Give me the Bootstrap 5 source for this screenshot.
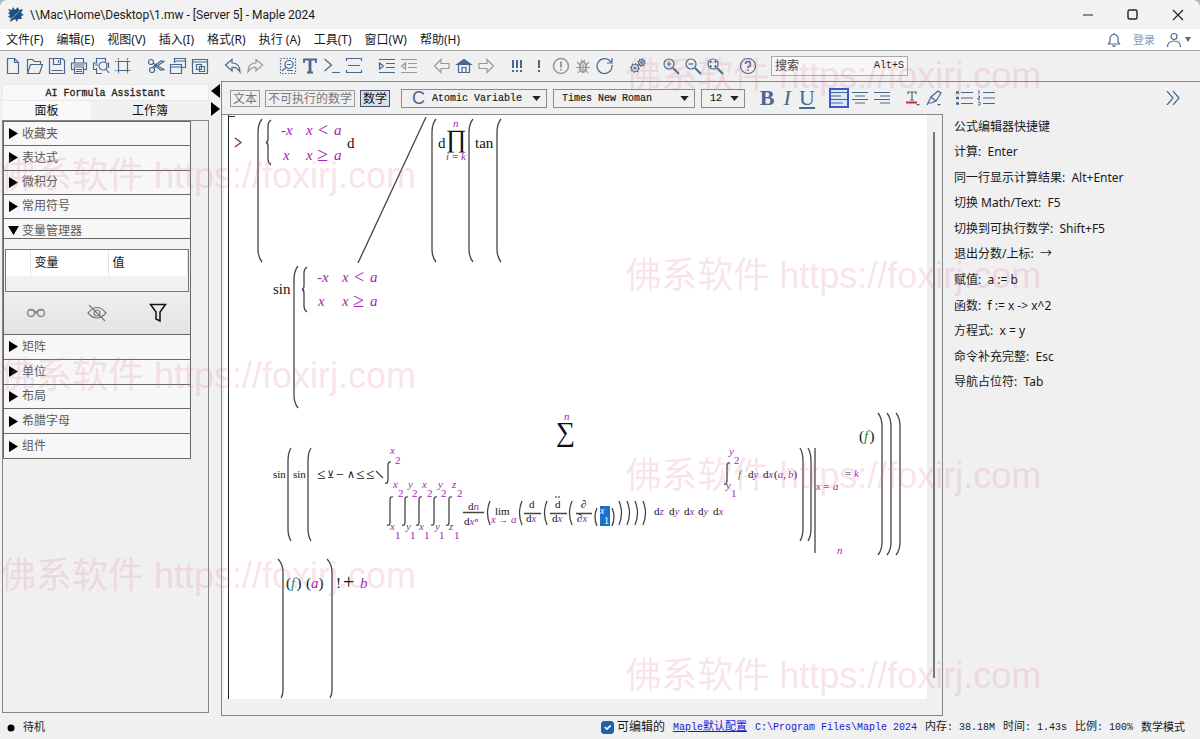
<!DOCTYPE html>
<html lang="zh-CN">
<head>
<meta charset="utf-8">
<meta name="viewport" content="width=device-width, initial-scale=1">
<title>Maple 2024</title>
<link href="https://cdn.jsdelivr.net/npm/bootstrap@5.3.0/dist/css/bootstrap.min.css" rel="stylesheet">
<style>
:root{--ink:#47698f;--line:#858585;--face:#f0f0f0;--ui:"Noto Sans","Noto Sans CJK SC",sans-serif;--mono:"Liberation Mono","Noto Sans CJK SC",monospace}
body{font-family:var(--ui);font-size:12px;line-height:18px;color:#1a1a1a;background:#a9bccb}
button{background:none;border:0;padding:0;color:inherit}
svg{display:block;flex:none}
.app{background:var(--face);border-radius:8px 8px 0 0;overflow:hidden}
.mono{font-family:var(--mono);font-size:10px}
.zh{font-size:11px}
.titlebar{height:29px;background:#f2f2f2;padding:0 0 0 7px}
.titlebar .name{font-family:Roboto,"Noto Sans",sans-serif;margin-left:6px}
.win{width:45px;height:29px;display:grid;place-items:center}
.menus{height:22px;background:#fff;border-bottom:1px solid #a3a3a3;padding:0 9px 0 6px}
.menus .items{gap:13px}
.menus a,.foot a{text-decoration:none;color:inherit}
.tools{height:30px;padding-left:2px;gap:11px}
.ico{width:22px;height:22px;display:grid;place-items:center;color:var(--ink)}
.ico svg,.tag svg{fill:none;stroke:currentColor;stroke-width:1.2}
.off{color:#999}
.pull{margin-left:-2px}
.find{width:137px;height:20px;border:1px solid #aaa;background:#f7f7f7;padding:0 3px;margin-left:1px}
.find input{border:0;background:none;outline:0;min-width:0;padding:0}
.find input::placeholder{color:#444;opacity:1}
.side{width:209px;padding:3px 0 3px 2px}
.tabs button{height:19px;flex:1;line-height:18px;color:#111}
.assist{height:17px;background:#f8f8f8;color:#222;-webkit-text-stroke:.3px;border:1px solid #e9e9e9!important}
.tabs .on{background:#f9f9f9;flex:0 0 43%}
.panelbox{border:1px solid var(--line);padding-right:17px;background:var(--face)}
.pal{border:1px solid #686868;border-width:1px 1px 0;display:grid;grid-auto-rows:1fr;background:#f7f7f7}
.pal.four{height:98px}.pal.five{height:124px;border-top:0}
.pal button,.vm-head{border-bottom:1px solid #686868;display:flex;align-items:center;gap:4px;padding-left:5px;color:#5a5a5a;width:100%;text-align:left}
.vm-head{height:20px;background:#f7f7f7;border-left:1px solid #686868!important;border-right:1px solid #686868!important;padding-top:4px!important;padding-left:4px;gap:3px}
.vm{border:1px solid #686868;border-top:0;background:linear-gradient(#f3f3f3 40%,#e3e3e3);height:96px;padding:10px 1px 0}
.vm .box{border:1px solid #777;height:43px;background:#f1f1f1}
.vm th{font-weight:400;background:#fff;height:26px;padding:0 4px;border-right:1px solid #e4e4e4;color:#111}
.vm .acts{height:42px}
.vm .acts button{flex:1;display:grid;place-items:center}
.split{width:12px;padding:3px 0 0 2px}
.work{border-left:1px solid #85878f;border-top:1px solid var(--line)}
.fmt{height:32px;padding-left:8px}
.tag{border:1px solid #999;height:17px;line-height:15px;padding:0 2px;color:#777;margin-right:5px;white-space:nowrap}
.tag.on{border-color:#42556e;background:#d5e0ee;color:#111}
.drop{position:relative;height:19px;margin-left:6px}
.drop select{appearance:none;width:100%;height:100%;border:1px solid #858c94;background:var(--face) url("data:image/svg+xml,%3Csvg xmlns='http://www.w3.org/2000/svg' viewBox='0 0 10 6'%3E%3Cpath d='M0 0h10L5 6z' fill='%23222'/%3E%3C/svg%3E") right 5px center/9px 5px no-repeat;padding:0 8px;color:#222;-webkit-text-stroke:.2px;outline:0;border-radius:0}
.drop .var{padding-left:30px}
.drop span{position:absolute;left:11px;top:0;font:18px/19px "Liberation Sans",sans-serif;color:var(--ink)}
.biu{font:22px/24px "Liberation Serif",serif;color:var(--ink);width:20px;text-align:center}
.pressed{border:2px solid #4057c8;background:#dde8f8;width:20px;height:20px}
.doc{border:solid #85878f;border-width:1px 1px 1px 0;padding:0 15px 16px 2px;position:relative}
.thumb{position:absolute;right:7px;top:17px;bottom:37px;width:2px;background:#777}
.sheet{background:#fff;padding-left:4px}
.group{border-left:1px solid #222;position:relative}
.group::before{content:"";position:absolute;left:0;top:1px;width:6px;height:1px;background:#333}
.help{width:257px;padding-left:11px}
.help ul{display:grid;grid-auto-rows:1fr;height:281px;align-items:center;white-space:pre}
.foot{height:23px;padding:0 15px 0 7px}
.foot a{color:#1818d8}
.foot input{width:13px;height:13px;margin:0 3px 0 0;border-radius:3px;background-size:11px}
.foot input:checked{background-color:#1b62ad;border-color:#1b62ad}
.veil{position:absolute;inset:26px 0 0 0;pointer-events:none;font:36px/100px "Liberation Sans","Noto Sans CJK SC",sans-serif;color:rgba(225,115,155,.21);white-space:nowrap;overflow:hidden}
.veil div:nth-child(odd){margin-left:52.1%}
/* worksheet mathematics */
.m{font-family:"Liberation Serif","DejaVu Serif",serif;font-size:15px;fill:#111}
.m .v{font-style:italic;fill:#a524b4}
.m .g{font-style:italic;fill:#1f8a50}
.m .s{font-size:11px}
.m .u{font-size:11px;fill:#a524b4}
.m .c path,.m path.c{fill:none;stroke:#444;stroke-width:1.3}
</style>
</head>
<body class="vh-100 position-relative overflow-hidden">
<div class="app h-100 d-flex flex-column">
<header class="titlebar d-flex align-items-center">
<svg width="17" height="17" viewBox="0 0 17 17" fill="#1c5180"><path d="M1 3l4 1 1-3 2 3 3-3 1 3 4-1-2 4 3 2-3 1 1 3-4 0-1 3-2-3-5 3 1-4-3-1 2-2-2-2 2-1z"/><path d="M3 14l10-9" stroke="#6f9fc4" fill="none"/></svg>
<span class="name me-auto">\\Mac\Home\Desktop\1.mw - [Server 5] - Maple 2024</span>
<button class="win" aria-label="最小化"><svg width="12" height="12" stroke="#222"><path d="M1 6h10"/></svg></button>
<button class="win" aria-label="最大化"><svg width="12" height="12" stroke="#222" stroke-width="1.4" fill="none"><rect x="1" y="1" width="9" height="9" rx="1.5"/></svg></button>
<button class="win" aria-label="关闭"><svg width="12" height="12" stroke="#222" stroke-width="1.2"><path d="M1 1l10 10M11 1L1 11"/></svg></button>
</header>
<nav class="menus d-flex align-items-center">
<div class="items d-flex me-auto"><a href="#">文件(F)</a><a href="#">编辑(E)</a><a href="#">视图(V)</a><a href="#">插入(I)</a><a href="#">格式(R)</a><a href="#">执行 (A)</a><a href="#">工具(T)</a><a href="#">窗口(W)</a><a href="#">帮助(H)</a></div>
<button class="ico me-2" aria-label="通知"><svg width="14" height="16" viewBox="0 0 14 16"><path d="M1.500 12h11L11 9.500V6.500a4 4 0 0 0-8 0v3zM7 1v1.500M5.500 13.500q1.500 1.500 3 0"/></svg></button>
<a href="#" class="zh me-2" style="color:#7f9cbc">登录</a>
<button class="ico" aria-label="账户"><svg width="16" height="16" viewBox="0 0 16 16"><circle cx="8" cy="4.500" r="3"/><path d="M1.500 15q0-6 6.500-6t6.500 6"/></svg></button>
<svg width="6" height="5"><path d="M0 0h6L3 5z" fill="#666"/></svg>
</nav>
<div class="tools d-flex align-items-center">
<div class="d-flex">
<button class="ico" aria-label="新建"><svg width="18" height="18"><path d="M3.500 1.500h7l4 4v11h-11zM10.500 1.500v4h4"/></svg></button>
<button class="ico" aria-label="打开"><svg width="18" height="18"><path d="M1.500 16.500v-14h5l2 2h6v3M1.500 16.500l3-9h12l-3 9z"/></svg></button>
<button class="ico" aria-label="保存"><svg width="18" height="18"><path d="M1.500 1.500h13l2 2v13h-15zM5.500 1.500v6h7v-6M10.500 3v3M3.500 13.500h11"/></svg></button>
<button class="ico" aria-label="打印"><svg width="18" height="18"><path d="M4.500 6V1.500h9V6M4 12.500H1.500V6h15v6.500H14M4.500 10h9v6.500h-9zM6 12.500h6M3.500 8h11M6 14.500h6"/></svg></button>
<button class="ico" aria-label="打印预览"><svg width="18" height="18"><path d="M4.500 6V1.500h9V5M4 12.500H1.500V6h4M4.500 11v5.500H10"/><circle cx="11" cy="9" r="4"/><path d="M14 12l3 4M16.500 11V6H15M3 8h3"/></svg></button>
<button class="ico" aria-label="区域"><svg width="18" height="18"><path d="M4.500 4.500h9v9h-9z"/><path d="M4.500 1v3M13.500 1v3M4.500 14v3M13.500 14v3M1 4.500h3M1 13.500h3M14 4.500h3M14 13.500h3" stroke-dasharray="1.500 1"/></svg></button>
</div>
<div class="d-flex">
<button class="ico" aria-label="剪切"><svg width="18" height="18"><circle cx="4" cy="5" r="2.500"/><circle cx="5" cy="13" r="2.500"/><path d="M6 6l11 6.500-3 .5L7 8M7 11l10-6.500-3-.5L6 10"/></svg></button>
<button class="ico" aria-label="复制"><svg width="18" height="18"><path d="M5.500 6V1.500h11v9H13M5.500 4h11M1.500 7.500h11v9h-11zM1.500 10h11"/></svg></button>
<button class="ico" aria-label="粘贴"><svg width="18" height="18"><path d="M1.500 2.500h15v14h-15zM1.500 5h15M5.500 7.500h5v5h-5zM8.500 9.500h5v5h-5z"/></svg></button>
</div>
<div class="d-flex">
<button class="ico" aria-label="撤销"><svg width="18" height="18"><path d="M1.500 8L8 2.500V6q8 0 8 9-3-5-8-4.500v3.500z"/></svg></button>
<button class="ico off" aria-label="重做"><svg width="18" height="18"><path d="M16.500 8L10 2.500V6q-8 0-8 9 3-5 8-4.500v3.500z"/></svg></button>
</div>
<div class="d-flex">
<button class="ico" aria-label="选择"><svg width="18" height="18"><path d="M1.500 1.500h15v15h-15z" stroke-dasharray="1.500 1.500"/><circle cx="10" cy="7.500" r="4"/><path d="M7 10.500l-4 3.500M8 7.500h4M8 13.500h6"/></svg></button>
<button class="ico" aria-label="文本"><svg width="16" height="18"><path d="M2 6V2.500h12V6M5 15.500h6" stroke-width="1.800"/><path d="M8 2v14" stroke-width="2.800"/></svg></button>
<button class="ico" aria-label="提示符"><svg width="18" height="18"><path d="M1.500 2l7 6-7 6M9 15.500h8"/></svg></button>
<button class="ico" aria-label="分节"><svg width="18" height="18"><path d="M1.500 4V1.500h15V4M3 8.500h12M1.500 13v2.500h15V13"/></svg></button>
</div>
<div class="d-flex">
<button class="ico" aria-label="缩进"><svg width="18" height="18"><path d="M1 2.500h16M8 6.500h9M8 10.500h9M1 15.500h16M1.500 6v6l4-3z"/></svg></button>
<button class="ico off" aria-label="减少缩进"><svg width="18" height="18"><path d="M1 2.500h16M8 6.500h9M8 10.500h9M1 15.500h16M5.500 6v6l-4-3z"/></svg></button>
</div>
<div class="d-flex">
<button class="ico off" aria-label="后退"><svg width="18" height="18"><path d="M1.500 9L8 2.500V6.500h8v5H8v4z"/></svg></button>
<button class="ico" aria-label="主页"><svg width="18" height="18"><path d="M3.500 7.500v8h11v-8M7 15.500v-5h4v5"/><path d="M2 7.500l7-5 7 5z" fill="currentColor"/></svg></button>
<button class="ico off" aria-label="前进"><svg width="18" height="18"><path d="M16.500 9L10 2.500V6.500H2v5h8v4z"/></svg></button>
</div>
<div class="d-flex pull">
<button class="ico" aria-label="全部执行"><svg width="14" height="16"><path d="M3 2v8M7 2v8M11 2v8M3 12v2M7 12v2M11 12v2" stroke-width="2"/></svg></button>
<button class="ico" aria-label="执行"><svg width="14" height="16"><path d="M7 2v8M7 12v2" stroke-width="2"/></svg></button>
<button class="ico off" aria-label="中断"><svg width="18" height="18"><circle cx="9" cy="9" r="7.500" stroke-width="1.600"/><path d="M9 4.500v6M9 12v1.500" stroke-width="2"/></svg></button>
<button class="ico off" aria-label="调试"><svg width="16" height="16"><ellipse cx="8" cy="9" rx="3" ry="5" stroke-width="2"/><path d="M2 4l3 3M14 4l-3 3M1 9.500h14M3 15l2-3M13 15l-2-3M6 2l2 2 2-2M8 6v7"/></svg></button>
<button class="ico" aria-label="重新启动"><svg width="18" height="18"><path d="M16 8A7.500 7.500 0 1 1 13 3l2 2M16 1v5h-5"/></svg></button>
</div>
<button class="ico" aria-label="选项"><svg width="18" height="18"><circle cx="6" cy="11" r="3.500"/><circle cx="6" cy="11" r="4.500" stroke-dasharray="1 2.500"/><circle cx="6" cy="11" r="1"/><circle cx="12.500" cy="5.500" r="2.800"/><circle cx="12.500" cy="5.500" r="3.800" stroke-dasharray="1 2"/><circle cx="12.500" cy="5.500" r=".8"/></svg></button>
<div class="d-flex">
<button class="ico" aria-label="放大"><svg width="18" height="18"><circle cx="7" cy="7" r="5"/><path d="M4.500 7h5M7 4.500v5"/><path d="M11 11l6 6" stroke-width="2"/></svg></button>
<button class="ico" aria-label="缩小"><svg width="18" height="18"><circle cx="7" cy="7" r="5"/><path d="M4.500 7h5"/><path d="M11 11l6 6" stroke-width="2"/></svg></button>
<button class="ico" aria-label="默认缩放"><svg width="18" height="18"><circle cx="7" cy="7" r="5"/><path d="M4.500 6V4.500H6M8 4.500h1.500V6M9.500 8v1.500H8M6 9.500H4.500V8"/><path d="M11 11l6 6" stroke-width="2"/></svg></button>
</div>
<button class="ico" aria-label="帮助"><svg width="18" height="18"><circle cx="9" cy="9" r="7.500"/><path d="M6.500 7q0-2.500 2.500-2.500T11.500 7 9 10v1M9 12.500V14" stroke-width="1.500"/></svg></button>
<label class="find d-flex align-items-center mono"><input class="flex-grow-1" style="font-family:var(--ui);font-size:12px" placeholder="搜索" aria-label="搜索"><span>Alt+S</span></label>
</div>
<main class="d-flex flex-grow-1" style="min-height:0">
<aside class="side d-flex flex-column">
<button class="assist mono">AI Formula Assistant</button>
<div class="tabs d-flex"><button class="on">面板</button><button>工作簿</button></div>
<div class="panelbox flex-grow-1">
<div class="pal four"><button><svg width="9" height="11"><path d="M0 0l9 5.500L0 11z"/></svg>收藏夹</button><button><svg width="9" height="11"><path d="M0 0l9 5.500L0 11z"/></svg>表达式</button><button><svg width="9" height="11"><path d="M0 0l9 5.500L0 11z"/></svg>微积分</button><button><svg width="9" height="11"><path d="M0 0l9 5.500L0 11z"/></svg>常用符号</button></div>
<button class="vm-head"><svg width="11" height="9"><path d="M0 0h11L5.500 9z"/></svg><span>变量管理器</span></button>
<div class="vm">
<div class="box"><table class="w-100"><thead><tr><th style="width:24px"></th><th style="width:78px">变量</th><th>值</th></tr></thead></table></div>
<div class="acts d-flex">
<button aria-label="查看"><svg width="20" height="12" fill="none" stroke="#888" stroke-width="1.500"><circle cx="5" cy="6" r="3.500"/><circle cx="15" cy="6" r="3.500"/><path d="M2 3h5q1 0 3 3 2-3 3-3h5"/></svg></button>
<button aria-label="隐藏"><svg width="20" height="18" fill="none" stroke="#777" stroke-width="1.200"><path d="M1 9q9-11 18 0-9 10-18 0z"/><circle cx="10" cy="9" r="3"/><path d="M2 1l16 16"/></svg></button>
<button aria-label="筛选"><svg width="18" height="20" fill="none" stroke="#111" stroke-width="1.500"><path d="M1.500 1.500h15L11 9v9l-4-2V9z"/></svg></button>
</div></div>
<div class="pal five"><button><svg width="9" height="11"><path d="M0 0l9 5.500L0 11z"/></svg>矩阵</button><button><svg width="9" height="11"><path d="M0 0l9 5.500L0 11z"/></svg>单位</button><button><svg width="9" height="11"><path d="M0 0l9 5.500L0 11z"/></svg>布局</button><button><svg width="9" height="11"><path d="M0 0l9 5.500L0 11z"/></svg>希腊字母</button><button><svg width="9" height="11"><path d="M0 0l9 5.500L0 11z"/></svg>组件</button></div>
</div>
</aside>
<div class="split d-flex flex-column gap-1"><button aria-label="收起"><svg width="9" height="14"><path d="M9 0v14L0 7z"/></svg></button><button aria-label="展开"><svg width="9" height="14"><path d="M0 0v14l9-7z"/></svg></button></div>
<section class="work d-flex flex-column flex-grow-1">
<div class="fmt d-flex align-items-center">
<button class="tag">文本</button><button class="tag">不可执行的数学</button><button class="tag on">数学</button>
<div class="drop mono" style="width:146px"><span>C</span><select class="var" aria-label="样式"><option>Atomic Variable</option></select></div>
<div class="drop mono" style="width:142px"><select aria-label="字体"><option>Times New Roman</option></select></div>
<div class="drop mono me-2" style="width:44px"><select aria-label="字号"><option>12</option></select></div>
<button class="biu fw-bold ms-1">B</button><button class="biu fst-italic">I</button><button class="biu text-decoration-underline me-2">U</button>
<div class="d-flex me-2">
<button class="ico pressed ms-1 my-auto" aria-label="左对齐"><svg width="16" height="16"><path d="M0 2.500h16M0 6h10M0 9.500h16M0 13h12"/></svg></button>
<button class="ico" aria-label="居中"><svg width="16" height="16"><path d="M0 2.500h16M3 6h10M0 9.500h16M3 13h10"/></svg></button>
<button class="ico" aria-label="右对齐"><svg width="16" height="16"><path d="M0 2.500h16M6 6h10M0 9.500h16M6 13h10"/></svg></button>
</div>
<button class="ico" aria-label="文字颜色"><svg width="16" height="18"><path d="M4 5V3h8v2M8 3v8M6 11h4"/><path d="M2 13.500h11" stroke="#d8232a" stroke-width="2"/><path d="M12 15h4l-2 2z" fill="currentColor" stroke="none"/></svg></button>
<button class="ico me-2" aria-label="突出显示"><svg width="16" height="18"><path d="M2 14l3-6 7-6 3 2-5 8-5 2zM5 8l5 4M2 14l-1 2"/><path d="M11 15h4l-2 2z" fill="currentColor" stroke="none"/></svg></button>
<button class="ico" aria-label="项目符号"><svg width="18" height="16"><path d="M6 2.500h12M6 8h12M6 13.500h12"/><path d="M1 2.500h3M1 8h3M1 13.500h3" stroke-width="2.500"/></svg></button>
<button class="ico me-auto" aria-label="编号"><svg width="18" height="16"><path d="M6 2.500h12M6 8h12M6 13.500h12"/><path d="M2 0v4M1 6h1.500v2H1v1.500h2M1 12h2v3H1" stroke-width="1"/></svg></button>
<button class="ico me-3" aria-label="更多"><svg width="14" height="14"><path d="M1 0l6 7-6 7M7 0l6 7-6 7"/></svg></button>
</div>
<div class="d-flex flex-grow-1">
<div class="doc d-flex flex-grow-1">
<div class="sheet d-flex flex-grow-1"><div class="group flex-grow-1">
<svg class="m" width="696" height="149" viewBox="229 115 696 149">
<path class="c" style="stroke:#8a3a2a" d="M235 138l6 4.500-6 4.500"/>
<g class="c"><path d="M262 119Q258 124 258 132V249Q258 257 262 262M271 120q-3 2-3 6v13q0 3-2 3.500q2 .5 2 3.500v13q0 4 3 6M426 117L358 263M436 119Q432 124 432 132V249Q432 257 436 262M473 119Q469 124 469 132V249Q469 257 473 262M501 119Q497 124 497 132V249Q497 257 501 262"/></g>
<g class="v"><text x="281" y="135">-x</text><text x="306" y="135">x</text><text x="318" y="136" font-style="normal" font-size="18">&lt;</text><text x="334" y="135">a</text><text x="283" y="160">x</text><text x="306" y="160">x</text><text x="317" y="161" font-style="normal" font-size="20">≥</text><text x="334" y="160">a</text></g>
<text x="347" y="148">d</text><text x="438" y="148">d</text><text x="446" y="147" font-size="25">∏</text><text x="475" y="148">tan</text>
<text class="v s" x="453" y="127">n</text><text class="v s" x="446" y="160">i</text><text class="s" x="452" y="160">=</text><text class="v s" x="461" y="160">k</text>
</svg>
<svg class="m" width="696" height="147" viewBox="229 264 696 147">
<g class="c"><path d="M298 266Q294 271 294 279V395Q294 403 298 408M307 267q-3 2-3 6v13q0 3-2 3.500q2 .5 2 3.500v13q0 4 3 6"/></g>
<text x="273" y="294">sin</text>
<g class="v"><text x="317" y="282">-x</text><text x="342" y="282">x</text><text x="354" y="283" font-style="normal" font-size="18">&lt;</text><text x="370" y="282">a</text><text x="318" y="306">x</text><text x="342" y="306">x</text><text x="353" y="307" font-style="normal" font-size="20">≥</text><text x="370" y="306">a</text></g>
</svg>
<svg class="m" width="696" height="147" viewBox="229 411 696 147">
<text class="v s" x="564" y="420">n</text><text x="556" y="441" font-size="27">∑</text>
<g class="c"><path d="M291 448Q288 453 288 461V529Q288 536 291 541M311 448Q308 453 308 461V529Q308 536 311 541M391 462q-3-1-3 4V479q0 5-3 4M393 497q-3-1-3 3V522q0 4-3 3M408 497q-3-1-3 3V522q0 4-3 3M422 497q-3-1-3 3V522q0 4-3 3M437 497q-3-1-3 3V522q0 4-3 3M452 497q-3-1-3 3V522q0 4-3 3M730 463q-3-1-3 4V480q0 5-3 4M463 512.500h21M524 513.500h17M550 513.500h17M576 513.500h16"/>
<path d="M490 501q-5 12 0 24M522 501q-5 12 0 24M547 501q-5 12 0 24M572 501q-5 12 0 24M597 508q-4 9 0 18M612 508q4 9 0 18M619 501q5 12 0 24M627 501q5 12 0 24M635 501q5 12 0 24M643 501q5 12 0 24M800 448Q803 453 803 461V529Q803 536 800 541M808 448Q811 453 811 461V529Q811 536 808 541M815 448V553M878 413Q882 418 882 426V542Q882 550 878 555M887 413Q891 418 891 426V542Q891 550 887 555M896 413Q900 418 900 426V542Q900 550 896 555"/></g>
<g class="s"><text x="273" y="478">sin</text><text x="293" y="478">sin</text><text x="317" y="479" font-size="15">≤</text><text x="327" y="478" font-size="10">⊻</text><text x="336" y="479" font-size="14">−</text><text x="347" y="478">∧</text><text x="356" y="479" font-size="15">≤</text><text x="366" y="479" font-size="15">≤</text><path class="c" d="M376 471l7 7"/>
<text x="468" y="510">d<tspan class="v">n</tspan></text><text x="464" y="525">d<tspan class="v">xⁿ</tspan></text><text x="495" y="515">lim</text><text class="v" x="491" y="523">x</text><text class="v" x="499" y="523" font-size="9">→</text><text class="v" x="511" y="523">a</text>
<text x="529" y="508">d</text><text x="526" y="522">d<tspan class="v">x</tspan></text><text x="555" y="508">d</text><g><circle cx="556" cy="497" r=".8"/><circle cx="559" cy="497" r=".8"/></g><text x="552" y="522">d<tspan class="v">x</tspan></text><text x="581" y="508">∂</text><text x="577" y="522">∂<tspan class="v">x</tspan></text>
<text x="654" y="515">d<tspan class="v">z</tspan></text><text x="669" y="515">d<tspan class="v">y</tspan></text><text x="684" y="515">d<tspan class="v">x</tspan></text><text x="698" y="515">d<tspan class="v">y</tspan></text><text x="713" y="515">d<tspan class="v">x</tspan></text>
<text class="g" x="738" y="478">f</text><text x="748" y="478">d<tspan class="v">y</tspan></text><text x="763" y="478">d<tspan class="v">x</tspan></text><text x="774" y="478">(<tspan class="v">a</tspan>,<tspan class="v" x="788">b</tspan>)</text>
<text class="v" x="816" y="490">x</text><text x="823" y="490">=</text><text class="v" x="833" y="490">a</text><text x="845" y="477">=</text><text class="v" x="854" y="477">k</text><text class="v" x="837" y="554">n</text></g>
<g class="u"><text class="v" x="390" y="454">x</text><text x="395" y="464">2</text><text class="v" x="393" y="488">x</text><text x="398" y="497">2</text><text class="v" x="408" y="488">y</text><text x="412" y="497">2</text><text class="v" x="422" y="488">x</text><text x="427" y="497">2</text><text class="v" x="438" y="488">y</text><text x="441" y="497">2</text><text class="v" x="452" y="488">z</text><text x="457" y="497">2</text>
<text class="v" x="390" y="530">x</text><text x="395" y="539">1</text><text class="v" x="406" y="530">y</text><text x="410" y="539">1</text><text class="v" x="419" y="530">x</text><text x="424" y="539">1</text><text class="v" x="435" y="530">y</text><text x="439" y="539">1</text><text class="v" x="449" y="530">z</text><text x="454" y="539">1</text>
<text class="v" x="729" y="455">y</text><text x="734" y="464">2</text><text class="v" x="726" y="489">y</text><text x="731" y="497">1</text></g>
<rect x="600" y="506" width="10" height="20" fill="#1f6fd0"/><text x="600" y="514" font-size="10" font-style="italic" fill="#fff">x</text><text x="604" y="524" font-size="10" fill="#fff">1</text>
<text x="859" y="441">(<tspan class="g">f</tspan>&#8202;)</text>
</svg>
<svg class="m" width="696" height="141" viewBox="229 558 696 141">
<g class="c"><path d="M278 559Q283 564 283 572V690Q283 695 281 698M327 559Q332 564 332 572V690Q332 695 330 698"/></g>
<text x="286" y="588">(<tspan class="g">f</tspan>&#8202;)</text><text x="306" y="588">(<tspan class="v">a</tspan>)</text><text x="336" y="588">!</text><text x="343" y="589" font-size="20">+</text><text class="v" x="360" y="588">b</text>
</svg>
</div></div>
<div class="thumb"></div>
</div>
<aside class="help"><ul class="list-unstyled m-0"><li>公式编辑器快捷键</li><li>计算:  Enter</li><li>同一行显示计算结果:  Alt+Enter</li><li>切换 Math/Text:  F5</li><li>切换到可执行数学:  Shift+F5</li><li>退出分数/上标:  →</li><li>赋值:  a := b</li><li>函数:  f := x -&gt; x^2</li><li>方程式:  x = y</li><li>命令补充完整:  Esc</li><li>导航占位符:  Tab</li></ul></aside>
</div>
</section>
</main>
<footer class="foot d-flex align-items-center mono">
<svg width="8" height="8"><circle cx="4" cy="4" r="3.500"/></svg><span class="zh ms-1 ps-1 me-auto">待机</span>
<label class="d-flex align-items-center" style="font-size:12px"><input class="form-check-input" type="checkbox" checked>可编辑的</label>
<a href="#" class="ms-2 text-decoration-underline">Maple<span class="zh">默认配置</span></a><a href="#" class="ms-2">C:\Program Files\Maple 2024</a>
<span class="ms-2"><span class="zh">内存</span>: 38.18M</span><span class="ms-2"><span class="zh">时间</span>: 1.43s</span><span class="ms-2"><span class="zh">比例</span>: 100%</span><span class="zh ms-2">数学模式</span>
</footer>
</div>
<div class="veil" aria-hidden="true"><div>佛系软件 https://foxirj.com</div><div>佛系软件 https://foxirj.com</div><div>佛系软件 https://foxirj.com</div><div>佛系软件 https://foxirj.com</div><div>佛系软件 https://foxirj.com</div><div>佛系软件 https://foxirj.com</div><div>佛系软件 https://foxirj.com</div></div>
<script src="https://cdn.jsdelivr.net/npm/bootstrap@5.3.0/dist/js/bootstrap.bundle.min.js"></script>
</body>
</html>
